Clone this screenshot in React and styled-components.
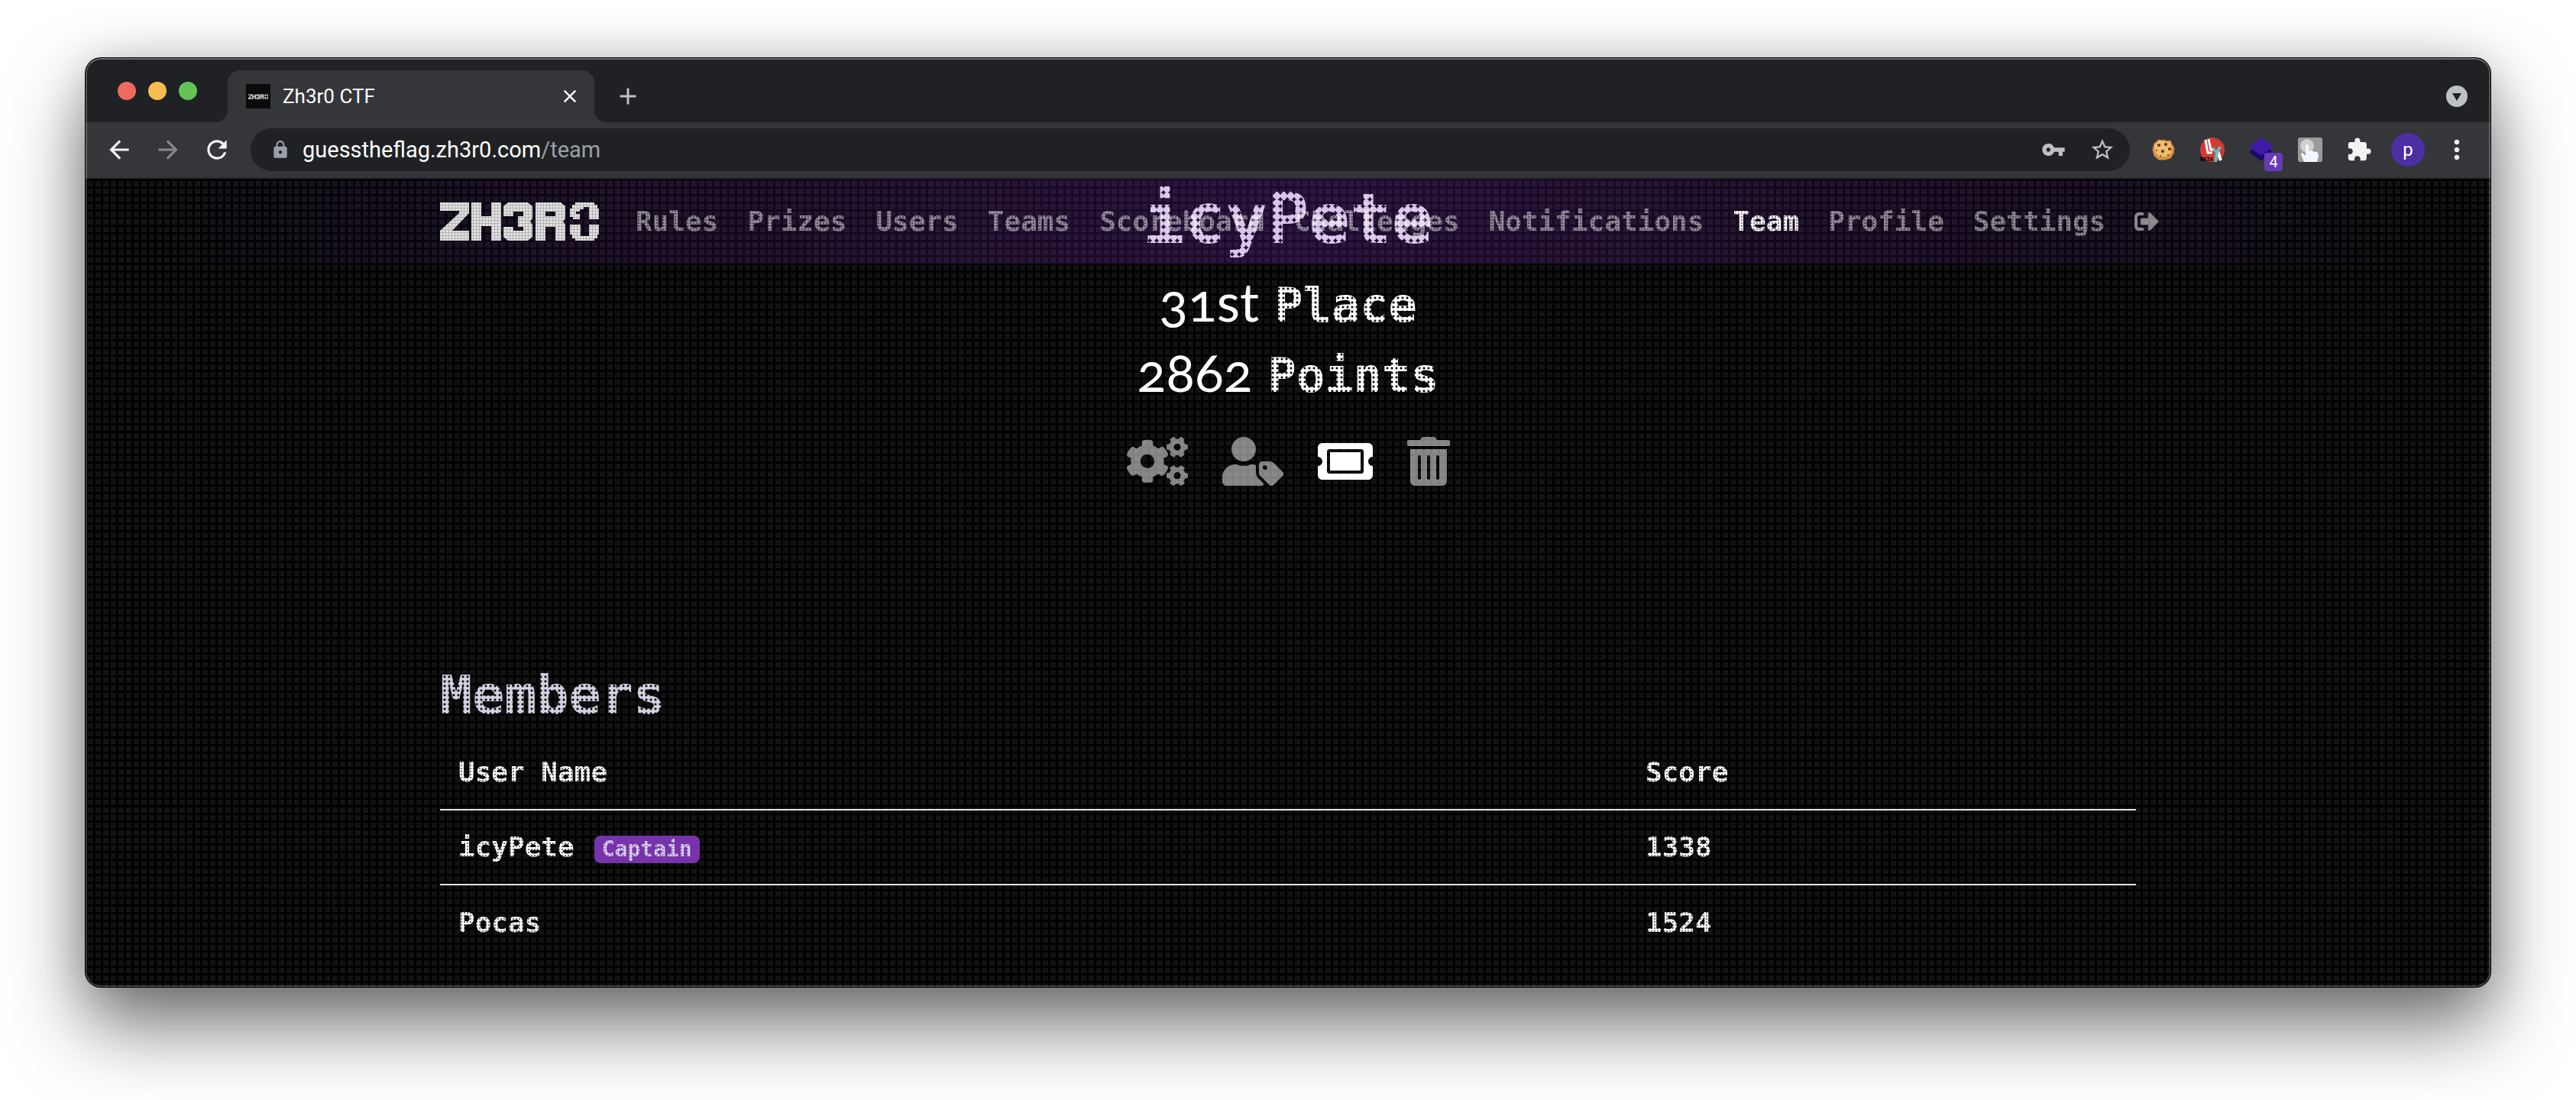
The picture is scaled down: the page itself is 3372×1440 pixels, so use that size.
import React from "react";
import styled, { createGlobalStyle } from "styled-components";
import { FaCogs, FaUserTag, FaTicketAlt, FaTrashAlt, FaSignOutAlt } from "react-icons/fa";
import { MdArrowBack, MdArrowForward, MdRefresh, MdLock, MdVpnKey, MdStarBorder, MdExtension, MdMoreVert, MdClose, MdAdd } from "react-icons/md";

const GlobalStyle = createGlobalStyle`
  * { box-sizing: border-box; }
  body { margin: 0; background: #fff; }
  button { border: 0; padding: 0; background: none; color: inherit; font: inherit; cursor: pointer; }
`;

const pixelFont = `"DejaVu Sans Mono", "Liberation Mono", monospace`;

const Desktop = styled.div`
  min-height: 100vh;
  padding: 76px 112px 148px;
  display: flex;
  font-family: Roboto, "Liberation Sans", sans-serif;
`;

const Window = styled.div`
  position: relative;
  flex: 1;
  min-width: 0;
  display: flex;
  flex-direction: column;
  border-radius: 20px;
  overflow: hidden;
  background: #202124;
  box-shadow: 0 0 0 1px #000, 0 50px 100px rgba(0, 0, 0, 0.56), 0 0 60px rgba(0, 0, 0, 0.16);
  &::after {
    content: "";
    position: absolute;
    inset: 0;
    z-index: 5;
    border-radius: inherit;
    border: 2px solid rgba(255, 255, 255, 0.22);
    border-top-color: rgba(255, 255, 255, 0.34);
    pointer-events: none;
  }
`;

const TabStrip = styled.div`
  height: 84px;
  padding: 16px 30px 0 42px;
  display: flex;
  color: #bdc1c6;
`;

const Lights = styled.div`
  display: flex;
  gap: 16px;
  padding-top: 15px;
  margin-right: 40px;
`;

const Light = styled.button`
  width: 24px;
  height: 24px;
  && { background: ${(p) => p.$color}; }
  border-radius: 50%;
`;

const Tab = styled.div`
  position: relative;
  width: 480px;
  height: 68px;
  padding: 0 18px 0 24px;
  display: flex;
  align-items: center;
  gap: 16px;
  border-radius: 16px 16px 0 0;
  background: #35363a;
  color: #fff;
  font-size: 26px;
  &::before, &::after {
    content: "";
    position: absolute;
    bottom: 0;
    width: 16px;
    height: 16px;
  }
  &::before { left: -16px; background: radial-gradient(circle at 0 0, transparent 16px, #35363a 16px); }
  &::after { right: -16px; background: radial-gradient(circle at 100% 0, transparent 16px, #35363a 16px); }
`;

const TabTitle = styled.span`
  flex: 1;
`;

const StripButton = styled.button`
  display: flex;
  align-items: center;
  font-size: 28px;
  svg { display: block; }
`;

const NewTab = styled(StripButton)`
  height: 68px;
  margin-left: 26px;
  font-size: 36px;
`;

const TabSearch = styled(StripButton)`
  height: 68px;
  margin-left: auto;
`;

const Toolbar = styled.div`
  height: 74px;
  padding: 0 22px 0 24px;
  display: flex;
  align-items: center;
  background: #35363a;
  border-bottom: 2px solid #2b2b2c;
  color: #f1f3f4;
`;

const NavButtons = styled.div`
  display: flex;
  gap: 24px;
  margin-right: 24px;
`;

const ToolButton = styled.button`
  display: flex;
  align-items: center;
  justify-content: center;
  width: ${(p) => p.$size || 40}px;
  height: 44px;
  font-size: ${(p) => p.$glyph || 38}px;
  && { color: ${(p) => p.$color || "#f1f3f4"}; }
  svg { flex: none; }
`;

const Omnibox = styled.div`
  flex: 1;
  height: 56px;
  padding: 0 20px 0 26px;
  display: flex;
  align-items: center;
  border-radius: 28px;
  background: #202124;
  color: #9aa0a6;
`;

const OmniActions = styled.div`
  display: flex;
  gap: 32px;
`;

const Address = styled.div`
  flex: 1;
  margin-left: 16px;
  color: #9aa0a6;
  font-size: 29px;
  b { font-weight: 400; color: #fff; }
`;

const Extensions = styled.div`
  display: flex;
  gap: 20px;
  margin-left: 22px;
`;

const ExtButton = styled.button`
  position: relative;
  width: 44px;
  height: 44px;
  display: flex;
  align-items: center;
  justify-content: center;
  svg { display: block; }
`;

const Badge = styled.span`
  position: absolute;
  right: -6px;
  bottom: -6px;
  width: 24px;
  height: 24px;
  border-radius: 4px;
  background: #673ab7;
  color: #fff;
  font-size: 20px;
  line-height: 25px;
  text-align: center;
`;

const Avatar = styled(ExtButton)`
  && { background: #4b2fa3; color: #fff; }
  border-radius: 50%;
  font-size: 24px;
`;

const Page = styled.div`
  flex: 1;
  background-color: #121213;
  background-image:
    linear-gradient(90deg, #000 3px, transparent 3px),
    linear-gradient(#000 3px, transparent 3px);
  background-size: 10px 10px;
  color: #fff;
`;

const dots = (pitch, gap) => `
  mask-image: radial-gradient(circle, #000 64%, rgba(0, 0, 0, ${gap}) 76%);
  mask-size: ${pitch}px ${pitch}px;
`;

const SiteNav = styled.nav`
  position: relative;
  z-index: 2;
  height: 112px;
  background: linear-gradient(90deg, transparent 3%, rgba(115, 40, 178, 0.1) 16%, rgba(115, 40, 178, 0.27) 50%, rgba(115, 40, 178, 0.1) 84%, transparent 97%);
`;

const NavInner = styled.div`
  width: 2220px;
  height: 100%;
  margin: 0 auto;
  display: flex;
  align-items: center;
  white-space: nowrap;
`;

const Brand = styled.a`
  margin-right: 48px;
  color: #fff;
  svg { display: block; }
`;

const NavLinks = styled.div`
  display: flex;
  align-items: center;
  gap: 38px;
`;

const NavLink = styled.a`
  font: 700 36px/44px ${pixelFont};
  color: ${(p) => (p.$active ? "#fff" : "rgba(255, 255, 255, 0.5)")};
  text-decoration: none;
  ${dots(4, 0.4)}
`;

const ExitLink = styled.a`
  color: rgba(255, 255, 255, 0.5);
  font-size: 32px;
  svg { display: block; }
`;

const Hero = styled.header`
  display: flex;
  flex-direction: column;
  align-items: center;
  margin-top: -112px;
`;

const TeamName = styled.h1`
  margin: 0 0 8px;
  font: 700 90px/106px ${pixelFont};
  ${dots(9, 0)}
`;

const Standing = styled.h2`
  margin: 0;
  display: flex;
  align-items: baseline;
  gap: 20px;
  height: 92px;
  font: 400 70px/92px Lato, "Open Sans", sans-serif;
  font-variant-numeric: oldstyle-nums;
`;

const StandingLabel = styled.span`
  font: 700 62px/92px ${pixelFont};
  ${dots(6, 0)}
`;

const Actions = styled.div`
  display: flex;
  gap: 45px;
  margin-top: 40px;
`;

const Action = styled.button`
  width: ${(p) => p.$width}px;
  height: 64px;
  && { color: ${(p) => (p.$active ? "#fff" : "rgba(255, 255, 255, 0.5)")}; }
  svg { display: block; width: 100%; height: 100%; }
`;

const Section = styled.section`
  width: 2220px;
  margin: 232px auto 0;
`;

const SectionTitle = styled.h3`
  margin: 0 0 10px;
  font: 700 70px/84px ${pixelFont};
  color: #d0d2e0;
  ${dots(6, 0)}
`;

const Table = styled.table`
  width: 100%;
  border-collapse: collapse;
  font: 700 36px/48px ${pixelFont};
  tbody tr { border-top: 2px solid #e0e4e4; }
  th, td { padding: 24px; height: 98px; text-align: left; font-weight: 700; }
  th:first-child { width: 70%; }
`;

const Dotted = styled.span`
  ${dots(4, 0.4)}
`;

const CaptainBadge = styled.span`
  display: inline-block;
  margin-left: 26px;
  padding: 0 10px;
  border-radius: 8px;
  background: #7733aa;
  color: #d6d0ea;
  font-size: 28px;
  line-height: 36px;
`;

function Logo({ width, height, label }) {
  return (
    <svg width={width} height={height} viewBox="0 0 208 50" role="img" aria-label={label}>
      <defs>
        <pattern id={"mesh" + width} width="4" height="4" patternUnits="userSpaceOnUse">
          <rect width="4" height="4" fill="#b4b4b4" />
          <rect width="3" height="3" fill="#e2e2e2" />
        </pattern>
      </defs>
      <g fill={`url(#mesh${width})`}>
        <path d="M0 0H38V14L16 37H38V50H0V37L25 14V11H0Z" />
        <path d="M41 0H54V18H67V0H80V50H67V31H54V50H41Z" />
        <path d="M89 0H115L121 5V21L118 25L121 29V45L115 50H89L83 45V32H96V37H109V32H102V18H109V12H96V18H83V5Z" />
        <path fillRule="evenodd" d="M125 0H158L164 5V21L161 25L164 29V50H151V32H138V50H125ZM138 12V18H151V12Z" />
        <path d="M177 0H202V3H206V8H208V22H195V6H188V9H183V12H178V15H183V22H174V19H170V8H173V3H177Z" />
        <path d="M170 29H184V44H195V29H208V42H206V47H202V50H177V47H173V42H170Z" />
      </g>
    </svg>
  );
}

const links = ["Rules", "Prizes", "Users", "Teams", "Scoreboard", "Challenges", "Notifications", "Team", "Profile", "Settings"];

const members = [
  { name: "icyPete", score: 1338, captain: true },
  { name: "Pocas", score: 1524 },
];

const actions = [
  { label: "Edit team", Icon: FaCogs, width: 80 },
  { label: "Choose captain", Icon: FaUserTag, width: 80 },
  { label: "Invite members", Icon: FaTicketAlt, width: 72, active: true },
  { label: "Disband team", Icon: FaTrashAlt, width: 56 },
];

export default function App() {
  return (
    <Desktop>
      <GlobalStyle />
      <Window>
        <TabStrip>
          <Lights>
            <Light $color="#ee6a5f" aria-label="Close window" />
            <Light $color="#f5bd4f" aria-label="Minimise" />
            <Light $color="#61c454" aria-label="Full screen" />
          </Lights>
          <Tab>
            <svg width="32" height="32" viewBox="0 0 32 32">
              <rect width="32" height="32" fill="#0a0a0a" />
              <g transform="translate(3 13)"><Logo width={26} height={7} /></g>
            </svg>
            <TabTitle>Zh3r0 CTF</TabTitle>
            <StripButton aria-label="Close tab"><MdClose /></StripButton>
          </Tab>
          <NewTab aria-label="New tab"><MdAdd /></NewTab>
          <TabSearch aria-label="Search tabs">
            <svg width="28" height="28" viewBox="0 0 28 28">
              <circle cx="14" cy="14" r="14" fill="#bdc1c6" />
              <path d="M8 10H20L14 20Z" fill="#202124" />
            </svg>
          </TabSearch>
        </TabStrip>
        <Toolbar>
          <NavButtons>
            <ToolButton aria-label="Back"><MdArrowBack /></ToolButton>
            <ToolButton aria-label="Forward" $color="#88898c"><MdArrowForward /></ToolButton>
            <ToolButton aria-label="Reload"><MdRefresh /></ToolButton>
          </NavButtons>
          <Omnibox>
            <MdLock size={26} />
            <Address><b>guesstheflag.zh3r0.com</b>/team</Address>
            <OmniActions>
              <ToolButton aria-label="Passwords" $size={32} $glyph={32} $color="#bdbfc2"><MdVpnKey /></ToolButton>
              <ToolButton aria-label="Bookmark" $size={32} $glyph={34} $color="#bdbfc2"><MdStarBorder /></ToolButton>
            </OmniActions>
          </Omnibox>
          <Extensions>
            <ExtButton aria-label="Cookie editor">
              <svg width="32" height="32" viewBox="0 0 32 32">
                <path d="M10 3L14 4L17 3L20 5L25 4L27 9L30 14L29 21L25 27L18 29L10 29L4 24L2 16L4 8Z" fill="#d98f3c" stroke="#d98f3c" strokeLinejoin="round" />
                <path d="M10 4L17 5L24 6L27 13L26 20L20 25L10 25L5 19L4 10Z" fill="#f1bd6e" />
                <g fill="#5b3516"><circle cx="10" cy="10" r="2" /><circle cx="19" cy="9" r="2" /><circle cx="15" cy="18" r="2" /><circle cx="7" cy="17" r="1" /><circle cx="24" cy="15" r="2" /><circle cx="12" cy="24" r="1" /><circle cx="22" cy="23" r="1" /></g>
              </svg>
            </ExtButton>
            <ExtButton aria-label="Beta extension">
              <svg width="32" height="32" viewBox="0 0 32 32">
                <circle cx="16" cy="16" r="16" fill="#d23a34" />
                <path d="M7 3L10 20H16M11 2L14 16H18" stroke="#fff" strokeWidth="3" fill="none" />
                <path d="M23 18L27 30" stroke="#fff" strokeWidth="4" />
                <path d="M15 13H18L21 17L24 12H28L24 20L22 32H18L20 21Z" fill="#56c5c3" />
                <text x="0" y="31" fontSize="7" fontWeight="700" fontFamily="Roboto, sans-serif" fill="#000">BETA</text>
              </svg>
            </ExtButton>
            <ExtButton aria-label="Layers extension">
              <svg width="32" height="32" viewBox="0 0 32 32">
                <path d="M16 8L30 18L16 31L0 19Z" fill="#1a0a6b" />
                <path d="M16 0L32 12L16 24L0 12Z" fill="#3f1aa5" />
              </svg>
              <Badge>4</Badge>
            </ExtButton>
            <ExtButton aria-label="Pointer extension">
              <svg width="32" height="32" viewBox="0 0 32 32">
                <rect width="32" height="32" rx="3" fill="#9b9b9b" />
                <circle cx="12" cy="11" r="9" fill="#d0d0d0" />
                <path d="M10 11a2 2 0 0 1 4 0v7q2-2 4 0 2-1 4 1 2-1 4 1l1 4-2 8H8L4 22q1-3 3-1l3 3Z" fill="#f2f6ff" />
              </svg>
            </ExtButton>
            <ExtButton aria-label="Extensions"><MdExtension size={34} /></ExtButton>
            <Avatar aria-label="Profile">p</Avatar>
            <ExtButton aria-label="Menu"><MdMoreVert size={40} /></ExtButton>
          </Extensions>
        </Toolbar>
        <Page>
          <SiteNav>
            <NavInner>
              <Brand href="#"><Logo width={208} height={50} label="ZH3R0" /></Brand>
              <NavLinks>
                {links.map((l) => (
                  <NavLink key={l} href="#" $active={l === "Team"}>{l}</NavLink>
                ))}
                <ExitLink href="#" aria-label="Log out"><FaSignOutAlt /></ExitLink>
              </NavLinks>
            </NavInner>
          </SiteNav>
          <Hero>
            <TeamName>icyPete</TeamName>
            <Standing>31st <StandingLabel>Place</StandingLabel></Standing>
            <Standing>2862 <StandingLabel>Points</StandingLabel></Standing>
            <Actions>
              {actions.map(({ label, Icon, width, active }) => (
                <Action key={label} aria-label={label} $width={width} $active={active}><Icon /></Action>
              ))}
            </Actions>
          </Hero>
          <Section>
            <SectionTitle>Members</SectionTitle>
            <Table>
              <thead>
                <tr><th><Dotted>User Name</Dotted></th><th><Dotted>Score</Dotted></th></tr>
              </thead>
              <tbody>
                {members.map((m) => (
                  <tr key={m.name}>
                    <td>
                      <Dotted>{m.name}</Dotted>
                      {m.captain && <CaptainBadge><Dotted>Captain</Dotted></CaptainBadge>}
                    </td>
                    <td><Dotted>{m.score}</Dotted></td>
                  </tr>
                ))}
              </tbody>
            </Table>
          </Section>
        </Page>
      </Window>
    </Desktop>
  );
}
